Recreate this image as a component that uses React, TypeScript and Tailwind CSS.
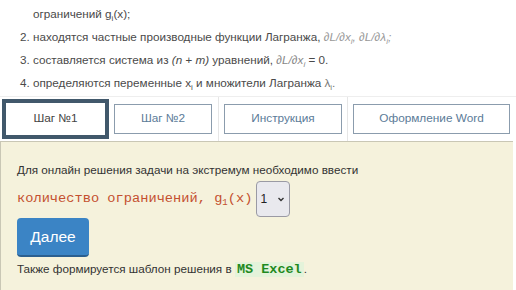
import React from 'react';

const tabs = ['Шаг №2', 'Инструкция', 'Оформление Word'];

function Sub({ children }: { children: React.ReactNode }) {
    return <span className="relative top-[3px] text-[8px] leading-none">{children}</span>;
}

export default function App() {
    return (
        <div className="w-[516px] h-[290px] overflow-hidden bg-white text-[#444] font-['Liberation_Sans',Arial,sans-serif] text-[13px]">
            {/* end of the steps list */}
            <ol className="pl-[20px] pt-[2px] leading-[23px] text-[11.7px] text-[#4a4a4a]">
                <li className="pl-[13px]">ограничений g<Sub>i</Sub>(x);</li>
                <li>2. находятся частные производные функции Лагранжа, <i className="text-[#999]">∂L/∂x<Sub>i</Sub>, ∂L/∂λ<Sub>i</Sub>;</i></li>
                <li>3. составляется система из <i>(n + m)</i> уравнений, <i className="text-[#888]">∂L/∂x<Sub>i</Sub></i> = 0.</li>
                <li>4. определяются переменные x<Sub>i</Sub> и множители Лагранжа <span className="text-[#777]">λ<Sub>i</Sub>.</span></li>
            </ol>

            {/* tabs */}
            <div className="mt-[2px] flex h-[45px] border-t border-[#eee] text-[11.8px]">
                <div className="w-[112px] flex items-center pl-[2px]">
                    <div className="w-[107px] h-[40px] border-[4px] border-[#41586b] bg-white flex items-center justify-center text-[#444]">
                        Шаг №1
                    </div>
                </div>
                <div className="w-[107px] flex items-center pl-[2px] border-r border-[#e6e6e6]">
                    <div className="w-[98px] h-[30px] border border-[#8b9cad] flex items-center justify-center text-[#5b7b98]">{tabs[0]}</div>
                </div>
                <div className="w-[129px] flex items-center pl-[5px] border-r border-[#e6e6e6]">
                    <div className="w-[118px] h-[30px] border border-[#8b9cad] flex items-center justify-center text-[#5b7b98]">{tabs[1]}</div>
                </div>
                <div className="flex-1 flex items-center pl-[5px]">
                    <div className="w-[157px] h-[30px] border border-[#8b9cad] flex items-center justify-center text-[#5b7b98]">{tabs[2]}</div>
                </div>
            </div>

            {/* step panel */}
            <div className="w-[513px] h-[160px] bg-[#f5f2dc] border-l border-t border-[#c9c7b5] pl-[16px] pt-[20px] text-[11.7px] text-[#333]">
                <p className="leading-[16px]">Для онлайн решения задачи на экстремум необходимо ввести</p>
                <div className="mt-[3px] flex items-center gap-[4px]">
                    <span className="font-['Liberation_Mono','Courier_New',monospace] text-[13.7px] text-[#c4502f]">
                        количество ограничений, g<span className="relative top-[3px] text-[9px]">1</span>(x)
                    </span>
                    <div className="w-[34px] h-[36px] rounded-[4px] border border-[#9a9aa4] bg-[#e9e9ee] flex items-center justify-between px-[3px] text-[12px] text-[#222]">
                        <span>1</span>
                        <svg width="10" height="10" viewBox="0 0 10 10" fill="none" stroke="#333" strokeWidth="1.4">
                            <path d="M2.5 4 L5 6.5 L7.5 4" />
                        </svg>
                    </div>
                </div>
                <button className="mt-[1px] w-[72px] h-[39px] rounded-[4px] bg-[#3b84c5] border-b-[2px] border-[#2b5f8f] text-white text-[15.5px]">
                    Далее
                </button>
                <p className="mt-[2px] leading-[20px]">
                    Также формируется шаблон решения в{' '}
                    <code className="font-['Liberation_Mono','Courier_New',monospace] font-bold text-[13.5px] text-[#1f8a1f] bg-[#e4f3da] px-[2px]">MS Excel</code>.
                </p>
            </div>
        </div>
    );
}
